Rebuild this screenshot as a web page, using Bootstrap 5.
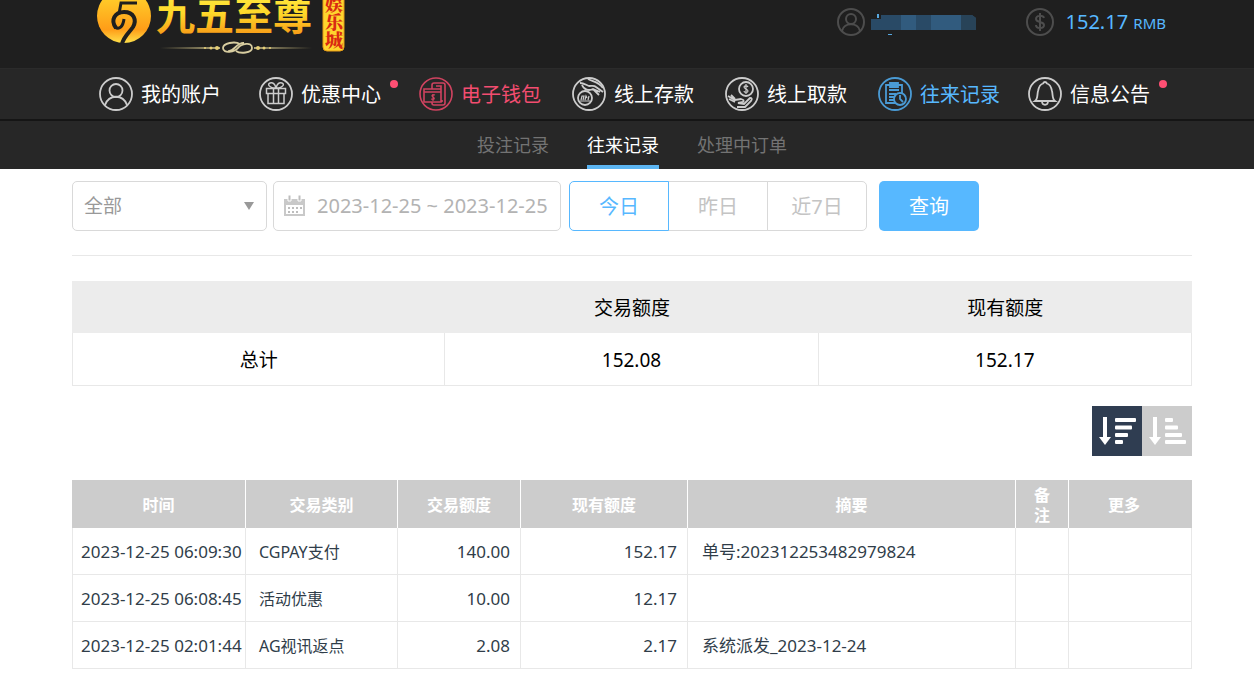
<!DOCTYPE html>
<html lang="zh-CN">
<head>
<meta charset="utf-8">
<meta name="viewport" content="width=device-width, initial-scale=1">
<title>往来记录</title>
<link href="https://cdn.jsdelivr.net/npm/bootstrap@5.3.0/dist/css/bootstrap.min.css" rel="stylesheet">
<style>
:root { --sky: #57b8ff; --rose: #f34d70; --line: #e8e8e8; }
body { font-family: "Noto Sans", "Noto Sans CJK SC", sans-serif; color: #000; background: #fff; }
a { text-decoration: none; }
svg { display: block; flex: none; }
.shell { padding-left: 72px; padding-right: 62px; }

/* top bar */
.brand-bar { height: 68px; background: #1f1f1f; padding-left: 96px; padding-right: 88px; overflow: hidden; }
.brand-seal { writing-mode: vertical-rl; }
.account { height: 44px; gap: 50px; color: var(--sky); }
.money { font-size: 20px; line-height: 28px; }
.money small { font-size: 15px; }

/* main navigation */
.main-nav { height: 53px; padding-left: 99px; background: #272727; border-top: 1px solid #2b2b2b; border-bottom: 2px solid #151515; }
.nav-entry { gap: 8px; font-size: 20px; line-height: 28px; color: #fff; white-space: nowrap; }
.nav-entry .label { padding-top: 2px; }
.nav-entry svg { color: #ccc; }
.nav-entry.rose, .nav-entry.rose svg { color: var(--rose); }
.nav-entry.rose svg { color: #d04360; }
.nav-entry.sky { color: var(--sky); }
.nav-entry.sky svg { color: #4a9bd5; }
.after-wide { margin-right: 38px; }
.after-mid { margin-right: 31px; }
.after-slim { margin-right: 28px; }
.dot { position: absolute; top: 3px; right: -17px; width: 8px; height: 8px; border-radius: 50%; background: #ff4f73; }
.sub-nav { height: 48px; gap: 38px; background: #272727; }
.sub-nav a { height: 48px; line-height: 48px; font-size: 18px; color: #737373; }
.sub-nav a.active { color: #fff; border-bottom: 4px solid #5cb5f2; }

/* filters */
.filters { padding-top: 12px; padding-bottom: 24px; border-bottom: 1px solid var(--line); }
.filters .form-select, .date-box, .days .btn, .search { height: 50px; border-radius: 5px; }
.filters .form-select { width: 195px; margin-right: 6px; padding: 0 11px; font-size: 19px; color: #999; border-color: #d9d9d9;
  background-image: url("data:image/svg+xml,%3Csvg xmlns='http://www.w3.org/2000/svg' viewBox='0 0 10 8'%3E%3Cpath fill='%23999' d='M0 0h10L5 8z'/%3E%3C/svg%3E");
  background-size: 10px 8px; background-position: right 12px center; }
.date-box { width: 288px; margin-right: 8px; padding-left: 10px; gap: 12px; border: 1px solid #d9d9d9; }
.date-box input { min-width: 0; flex: 1; border: 0; padding: 0; font-size: 20px; color: #b3b3b3; background: none; }
.days { margin-right: 12px; }
.days .btn { width: 100px; padding: 2px 0 0; font-size: 20px; color: #c4c4c4; border-color: #d9d9d9; background: #fff; }
.days .btn.active { color: var(--sky); border-color: var(--sky); background: #fff; }
.search { width: 100px; padding: 2px 0 0; font-size: 20px; color: #fff; background: var(--sky); border: 0; }
.search:hover { background: #42a8f2; color: #fff; }

/* tables */
.totals { margin: 25px 0 20px; font-size: 19px; line-height: 28px; table-layout: fixed; border-collapse: separate; border-spacing: 0; width: 100%; text-align: center; }
.totals thead th { height: 52px; padding-top: 2px; font-weight: 400; background: #ececec; }
.totals tbody > tr > * { height: 53px; padding-top: 2px; font-weight: 400; border-right: 1px solid var(--line); border-bottom: 1px solid var(--line); }
.totals tbody > tr > :first-child { border-left: 1px solid var(--line); }
.sort button { width: 50px; height: 50px; padding: 0; border: 0; color: #fff; background: #ccc; }
.sort button.active { background: #2f3d51; }
.records { margin: 24px 0 0; width: 100%; table-layout: fixed; border-collapse: separate; border-spacing: 0; color: #303d49; font-size: 17px; line-height: 20px; }
.records th { height: 48px; padding: 2px 14px 0; font-size: 16px; font-weight: 700; text-align: center; color: #fff; background: #ccc; border-right: 1px solid #fff; }
.records th:last-child { padding-right: 26px; border-right-color: #ccc; }
.records td { height: 47px; padding: 2px 10px 0 14px; white-space: nowrap; border-right: 1px solid var(--line); border-bottom: 1px solid var(--line); }
.records td:first-child { padding-left: 8px; padding-right: 0; border-left: 1px solid var(--line); }
.records .kind { font-size: 16px; padding-left: 13px; }
.c-time { width: 174px; } .c-kind { width: 152px; } .c-sum { width: 123px; } .c-left { width: 167px; }
.c-note { width: 53px; } .c-more { width: 123px; }
</style>
</head>
<body>
<header>
  <div class="brand-bar d-flex justify-content-between align-items-start">
    <a href="#" aria-label="九五至尊娱乐城">
      <svg width="252" height="56" viewBox="0 0 252 56">
        <defs>
          <linearGradient id="gold" x1="0" y1="0" x2="0" y2="1"><stop offset="0" stop-color="#fff04a"/><stop offset=".5" stop-color="#ffd92a"/><stop offset="1" stop-color="#f58a12"/></linearGradient>
          <linearGradient id="disc" x1="0" y1="0" x2="0" y2="1"><stop offset="0.2" stop-color="#ffc928"/><stop offset=".75" stop-color="#ff9d18"/><stop offset="1" stop-color="#ffe04a"/></linearGradient>
          <linearGradient id="rule"><stop offset="0" stop-color="#c9b97a" stop-opacity="0"/><stop offset=".5" stop-color="#e6d9a0"/><stop offset="1" stop-color="#c9b97a" stop-opacity="0"/></linearGradient>
        </defs>
        <circle cx="28" cy="16" r="27" fill="url(#disc)"/>
        <path d="M41 3H25L23 14" fill="none" stroke="#1f1f1f" stroke-width="3"/>
        <path d="M20 28C14 20 19 12 28 12c10 0 13 8 9 15-4 6-9 9-11 17" fill="none" stroke="#1f1f1f" stroke-width="4"/>
        <path d="M19 27c4 3 8 0 9-8" fill="none" stroke="#1f1f1f" stroke-width="3"/>
        <text x="60" y="30" font-family="'Noto Sans CJK SC',sans-serif" font-weight="700" font-size="39" fill="url(#gold)">九五至尊</text>
        <path d="M64 47h152v2H64z" fill="url(#rule)"/>
        <rect x="124" y="42" width="34" height="12" fill="#1f1f1f"/>
        <path d="M144 44c-5-3-17-1-17 4 0 6 12 4 15 0s14-7 14 0c0 5-12 6-16 3M132 51c6 1 9-9 16-8" fill="none" stroke="#d8cda0" stroke-width="1.800"/>
        <g fill="#e6cf76"><circle cx="121" cy="48" r="2"/><circle cx="115" cy="48" r="1.500"/><circle cx="109" cy="48" r="1"/><circle cx="162" cy="48" r="2"/><circle cx="168" cy="48" r="1.500"/><circle cx="174" cy="48" r="1"/></g>
        <rect x="227" y="-10" width="21" height="61" rx="4" fill="#ffd52e" stroke="#e79a16"/>
        <text class="brand-seal" x="238" y="-5" font-family="'Noto Serif CJK SC','Noto Sans CJK SC',sans-serif" font-weight="900" font-size="18" fill="#d92a12">娱乐城</text>
      </svg>
    </a>
    <div class="account d-flex align-items-center">
      <div class="d-flex align-items-center">
        <svg width="28" height="28" viewBox="0 0 28 28" fill="none" stroke="#4d4d4d" stroke-width="2"><circle cx="14" cy="14" r="13"/><circle cx="14" cy="11" r="5"/><path d="M5 23c2-9 16-9 18 0"/></svg>
        <svg width="111" height="28" viewBox="0 0 111 28" aria-label="用户名"><path d="M6 11h10V7h91l4 3v12H6z" fill="#294a66"/><path fill="#315b7e" d="M36 7h15v15H36zM66 7h30v15H66z"/><path fill="#284358" d="M96 7h11l4 3v12H96z"/><path d="M12 6h2v4h-2zM23 26h4v1h-4z" fill="#57a8e0"/></svg>
      </div>
      <div class="d-flex align-items-center money">
        <svg class="me-2" width="28" height="28" viewBox="0 0 28 28" fill="none" stroke="#4d4d4d" stroke-width="2"><circle cx="14" cy="14" r="13"/><path d="M18 10c-1-3-8-3-8 1s8 2 8 6-8 4-8 0M14 5v18"/></svg>
        <span class="ms-1">152.17 <small>RMB</small></span>
      </div>
    </div>
  </div>
  <nav class="main-nav d-flex align-items-center">
    <a href="#" class="nav-entry d-flex align-items-center after-wide">
      <svg width="34" height="34" viewBox="0 0 34 34" fill="none" stroke="currentColor" stroke-width="1.800"><circle cx="17" cy="17" r="16"/><circle cx="17" cy="13.500" r="6.500"/><path d="M6 28c4-11 18-11 22 0"/></svg><span class="label">我的账户</span></a>
    <a href="#" class="nav-entry d-flex align-items-center position-relative after-wide">
      <svg width="34" height="34" viewBox="0 0 34 34" fill="none" stroke="currentColor" stroke-width="1.500"><circle cx="17" cy="17" r="16" stroke-width="1.800"/><path d="M7.500 11.500h19v5h-19zM9 16.500h16v10H9zM14.500 11.500v15M19.500 11.500v15M17 11c-7 0-9-4-6-5s5 1 6 5c1-4 3-6 6-5s1 5-6 5z"/></svg><span class="label">优惠中心</span><span class="dot"></span></a>
    <a href="#" class="nav-entry rose d-flex align-items-center after-mid">
      <svg width="34" height="34" viewBox="0 0 34 34" fill="none" stroke="currentColor" stroke-width="1.600"><circle cx="17" cy="17" r="16"/><path d="M13 12V8q0-2 2-2h9q2 0 2 2v18q0 2-2 2h-9q-2 0-2-2v-1M5 12h17v13H5zM5 15h17M17 9h5v3M23 23v2"/><path d="M16 18c-3-1-4 1-2 2s2 3-2 2M14 17v7" stroke-width="1.200"/></svg><span class="label">电子钱包</span></a>
    <a href="#" class="nav-entry d-flex align-items-center after-mid">
      <svg width="34" height="34" viewBox="0 0 34 34" fill="none" stroke="currentColor" stroke-width="1.800"><circle cx="17" cy="17" r="16"/><circle cx="13" cy="21" r="7"/><path d="M8 24h10M9 23l1-4h2l-1 4M13 23l1-4 1 2M16 23l1-4" stroke-width="1.200"/><path d="M8 6c4 0 6 2 9 3 3 0 5-1 7 1l7 5M10 8c2 5 7 6 11 4l6 6M16 2c5 3 10 2 15 9M21 12l7 3"/></svg><span class="label">线上存款</span></a>
    <a href="#" class="nav-entry d-flex align-items-center after-mid">
      <svg width="34" height="34" viewBox="0 0 34 34" fill="none" stroke="currentColor" stroke-width="1.800"><circle cx="17" cy="17" r="16"/><circle cx="21" cy="12" r="7"/><path d="M23 10c-1-2-4-1-4 0 0 2 4 2 4 4s-4 2-4 0M21 7v10" stroke-width="1.200"/><path d="M3 19l7 4 6-1q4 1 2 3l-5 1 6 1 6-6q3 0 1 3l-6 6H12M4 22l6 3M6 18l4 4"/></svg><span class="label">线上取款</span></a>
    <a href="#" class="nav-entry sky d-flex align-items-center after-slim">
      <svg width="34" height="34" viewBox="0 0 34 34" fill="none" stroke="currentColor" stroke-width="1.800"><circle cx="17" cy="17" r="16"/><path d="M17 26H8V8h16v8M12 8V6h8v4h-8zM11 13h10M11 17h7M11 20h6M11 23h5"/><circle cx="22" cy="22" r="6"/><path d="M22 18v4l3 3"/></svg><span class="label">往来记录</span></a>
    <a href="#" class="nav-entry d-flex align-items-center position-relative">
      <svg width="34" height="34" viewBox="0 0 34 34" fill="none" stroke="currentColor" stroke-width="1.800"><circle cx="17" cy="17" r="16"/><path d="M7 24c3-2 2-6 3-10 1-5 3-7 5-7.500 1-2 3-2 4 0 2 .5 4 2.500 5 7.500 1 4 0 8 3 10zM14 24c0 5 6 5 6 0"/></svg><span class="label">信息公告</span><span class="dot"></span></a>
  </nav>
  <nav class="sub-nav shell d-flex justify-content-center">
    <a href="#">投注记录</a>
    <a href="#" class="active" aria-current="page">往来记录</a>
    <a href="#">处理中订单</a>
  </nav>
</header>

<main class="shell">
  <form class="filters d-flex align-items-center" onsubmit="return false">
    <select class="form-select" aria-label="类别"><option>全部</option></select>
    <div class="date-box d-flex align-items-center">
      <svg width="21" height="22" viewBox="0 0 21 22"><path d="M0 4h21v17H0z" fill="#c9c9c9"/><path d="M2 10h17v9H2z" fill="#fff"/><path d="M4 0h3v6H4zM14 0h3v6h-3z" fill="#bdbdbd" stroke="#fff"/><path d="M4 12h2v2H4zM8 12h2v2H8zM12 12h2v2h-2zM16 12h2v2h-2zM4 16h2v2H4zM8 16h2v2H8zM12 16h2v2h-2z" fill="#bdbdbd"/></svg>
      <input type="text" value="2023-12-25 ~ 2023-12-25" aria-label="日期范围">
    </div>
    <div class="btn-group days">
      <button type="button" class="btn active">今日</button>
      <button type="button" class="btn">昨日</button>
      <button type="button" class="btn">近7日</button>
    </div>
    <button type="submit" class="btn search">查询</button>
  </form>

  <table class="totals">
    <thead><tr><th></th><th scope="col">交易额度</th><th scope="col">现有额度</th></tr></thead>
    <tbody><tr><th scope="row">总计</th><td>152.08</td><td>152.17</td></tr></tbody>
  </table>

  <div class="sort d-flex justify-content-end">
    <button type="button" class="active" aria-label="降序"><svg width="50" height="50" viewBox="0 0 50 50" fill="currentColor"><path d="M11 11h4v20h4l-6 8-6-8h4z"/><rect x="23" y="12" width="21" height="4" rx="1"/><rect x="23" y="19.500" width="17" height="4" rx="1"/><rect x="23" y="27" width="13" height="4" rx="1"/><rect x="23" y="34" width="8" height="4" rx="1"/></svg></button>
    <button type="button" aria-label="升序"><svg width="50" height="50" viewBox="0 0 50 50" fill="currentColor"><path d="M11 11h4v20h4l-6 8-6-8h4z"/><rect x="23" y="12" width="8" height="4" rx="1"/><rect x="23" y="19.500" width="13" height="4" rx="1"/><rect x="23" y="27" width="17" height="4" rx="1"/><rect x="23" y="34" width="21" height="4" rx="1"/></svg></button>
  </div>

  <table class="records">
    <colgroup><col class="c-time"><col class="c-kind"><col class="c-sum"><col class="c-left"><col><col class="c-note"><col class="c-more"></colgroup>
    <thead><tr><th scope="col">时间</th><th scope="col">交易类别</th><th scope="col">交易额度</th><th scope="col">现有额度</th><th scope="col">摘要</th><th scope="col">备注</th><th scope="col">更多</th></tr></thead>
    <tbody>
      <tr><td>2023-12-25 06:09:30</td><td class="kind">CGPAY支付</td><td class="text-end">140.00</td><td class="text-end">152.17</td><td>单号:202312253482979824</td><td></td><td></td></tr>
      <tr><td>2023-12-25 06:08:45</td><td class="kind">活动优惠</td><td class="text-end">10.00</td><td class="text-end">12.17</td><td></td><td></td><td></td></tr>
      <tr><td>2023-12-25 02:01:44</td><td class="kind">AG视讯返点</td><td class="text-end">2.08</td><td class="text-end">2.17</td><td>系统派发_2023-12-24</td><td></td><td></td></tr>
    </tbody>
  </table>
</main>
<script src="https://cdn.jsdelivr.net/npm/bootstrap@5.3.0/dist/js/bootstrap.bundle.min.js"></script>
</body>
</html>
